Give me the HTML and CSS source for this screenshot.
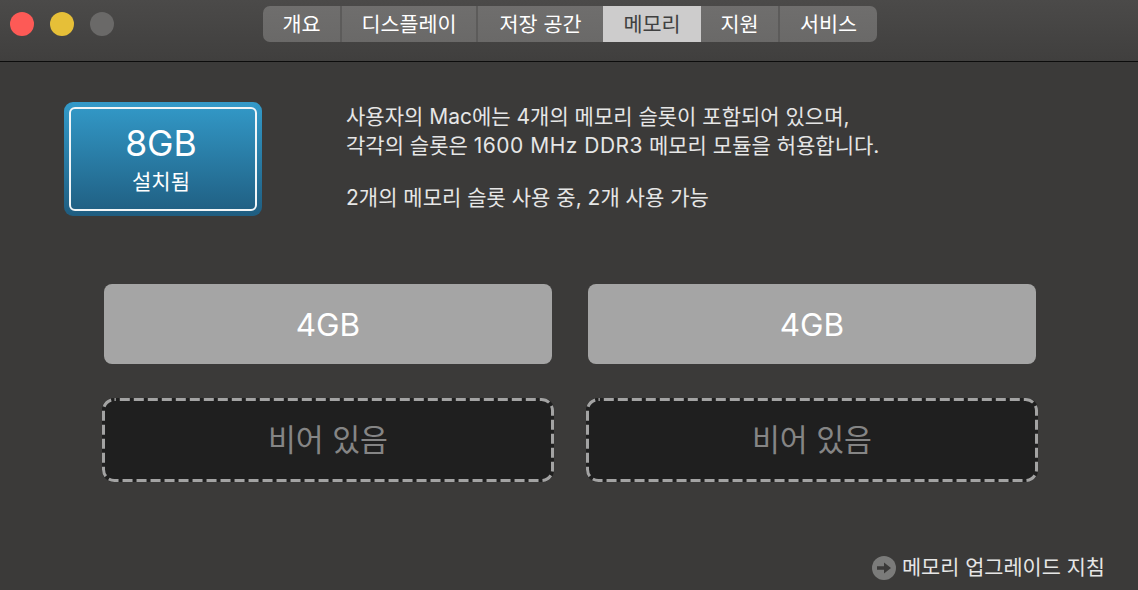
FILE: index.html
```html
<!DOCTYPE html>
<html lang="ko">
<head>
  <meta charset="UTF-8" />
  <title>메모리</title>
  <link rel="stylesheet" href="styles.css">
</head>
<body>
  <header class="titlebar">
    <div class="lights">
      <span class="light red"></span>
      <span class="light yellow"></span>
      <span class="light gray"></span>
    </div>
    <nav class="tabs">
      <div class="tab">개요</div>
      <div class="tab">디스플레이</div>
      <div class="tab">저장 공간</div>
      <div class="tab active">메모리</div>
      <div class="tab">지원</div>
      <div class="tab">서비스</div>
    </nav>
  </header>

  <main class="content">
    <section class="summary">
      <div class="total">
        <div class="total-inner">
          <div class="total-size">8GB</div>
          <div class="total-label">설치됨</div>
        </div>
      </div>
      <div class="info">
        <p>사용자의 Mac에는 4개의 메모리 슬롯이 포함되어 있으며,<br>각각의 슬롯은 <span class="spec">1600 MHz DDR3</span> 메모리 모듈을 허용합니다.</p>
        <p>2개의 메모리 슬롯 사용 중, 2개 사용 가능</p>
      </div>
    </section>

    <section class="slots">
      <div class="slot">4GB</div>
      <div class="slot">4GB</div>
      <div class="slot empty">
        <svg class="dashes" width="452" height="84" viewBox="0 0 452 84"><rect x="1.5" y="1.5" width="449" height="81" rx="11"/></svg>
        비어 있음
      </div>
      <div class="slot empty">
        <svg class="dashes" width="452" height="84" viewBox="0 0 452 84"><rect x="1.5" y="1.5" width="449" height="81" rx="11"/></svg>
        비어 있음
      </div>
    </section>

    <div class="footer">
      <svg class="arrow" width="24" height="24" viewBox="0 0 24 24">
        <circle cx="12" cy="12" r="12" fill="#7b7b7a"/>
        <path d="M5 10.3h7V6.4l7 5.6-7 5.6v-3.9H5z" fill="#3b3a39"/>
      </svg>
      <span>메모리 업그레이드 지침</span>
    </div>
  </main>
</body>
</html>
```

FILE: styles.css
```css
body {
  margin: 0;
  height: 590px;
  overflow: hidden;
  background: #3b3a39;
  color: #e6e6e6;
  font-family: Inter, "Noto Sans CJK KR", sans-serif;
}

.titlebar {
  display: flex;
  height: 61px;
  border-bottom: 1px solid #0c0c0c;
  background: linear-gradient(#4b4a49, #403f3e);
}

.lights {
  display: flex;
  gap: 16px;
  padding: 12px 0 0 10px;
  width: 263px;
  box-sizing: border-box;
}

.light {
  width: 24px;
  height: 24px;
  border-radius: 50%;
}

.red { background: #fd5a56; }
.yellow { background: #e6bf38; }
.gray { background: #6a6968; }

.tabs {
  display: grid;
  grid-template-columns: 79px 136px 125px 98px 79px 97px;
  height: 36px;
  margin-top: 6px;
  border-radius: 7px;
  overflow: hidden;
  background: linear-gradient(#6f6e6d, #6a6968);
}

.tab {
  border-right: 2px solid #5c5b5a;
  color: #fff;
  font-size: 20.7px;
  line-height: 37px;
  text-align: center;
}

.tab:last-child { border-right: 0; }
.tab:nth-child(3) { border-right: 0; }

.tab.active {
  border-right: 0;
  background: #cdcccc;
  color: #404040;
}

.content {
  padding: 40px 0 0 64px;
}

.summary {
  display: flex;
  height: 114px;
}

.total {
  width: 198px;
  height: 114px;
  box-sizing: border-box;
  padding: 5px;
  border-radius: 9px;
  background: linear-gradient(#339ac9, #1f5d80);
}

.total-inner {
  height: 104px;
  box-sizing: border-box;
  padding-right: 4px;
  border: 2px solid #f1f6f8;
  border-radius: 6px;
  color: #fff;
  text-align: center;
}

.total-size {
  margin-top: 15px;
  font-size: 35.5px;
  line-height: 40px;
}

.total-label {
  margin-top: 6px;
  font-size: 21px;
  line-height: 24px;
}

.info {
  margin-left: 84px;
  font-size: 21px;
  line-height: 29px;
}

.info p {
  margin: 0 0 23px;
}

.spec {
  letter-spacing: 0.5px;
}

.slots {
  display: grid;
  grid-template-columns: 448px 448px;
  grid-auto-rows: 80px;
  gap: 36px;
  margin: 68px 0 0 40px;
}

.slot {
  border-radius: 8px;
  background: #a5a5a5;
  color: #fff;
  font-size: 31.5px;
  line-height: 82px;
  text-align: center;
}

.slot.empty {
  position: relative;
  margin: -2px;
  border-radius: 12px;
  background: #1f1f1f;
  color: #858585;
  font-size: 30.3px;
  line-height: 84px;
}

.dashes {
  position: absolute;
  top: 0;
  left: 0;
}

.dashes rect {
  fill: none;
  stroke: #a3a3a3;
  stroke-width: 3;
  stroke-dasharray: 10 4;
  stroke-dashoffset: 8.7;
}

.footer {
  display: flex;
  align-items: center;
  justify-content: flex-end;
  gap: 6px;
  margin: 76px 33px 0 0;
  font-size: 20.8px;
  line-height: 24px;
}
```
